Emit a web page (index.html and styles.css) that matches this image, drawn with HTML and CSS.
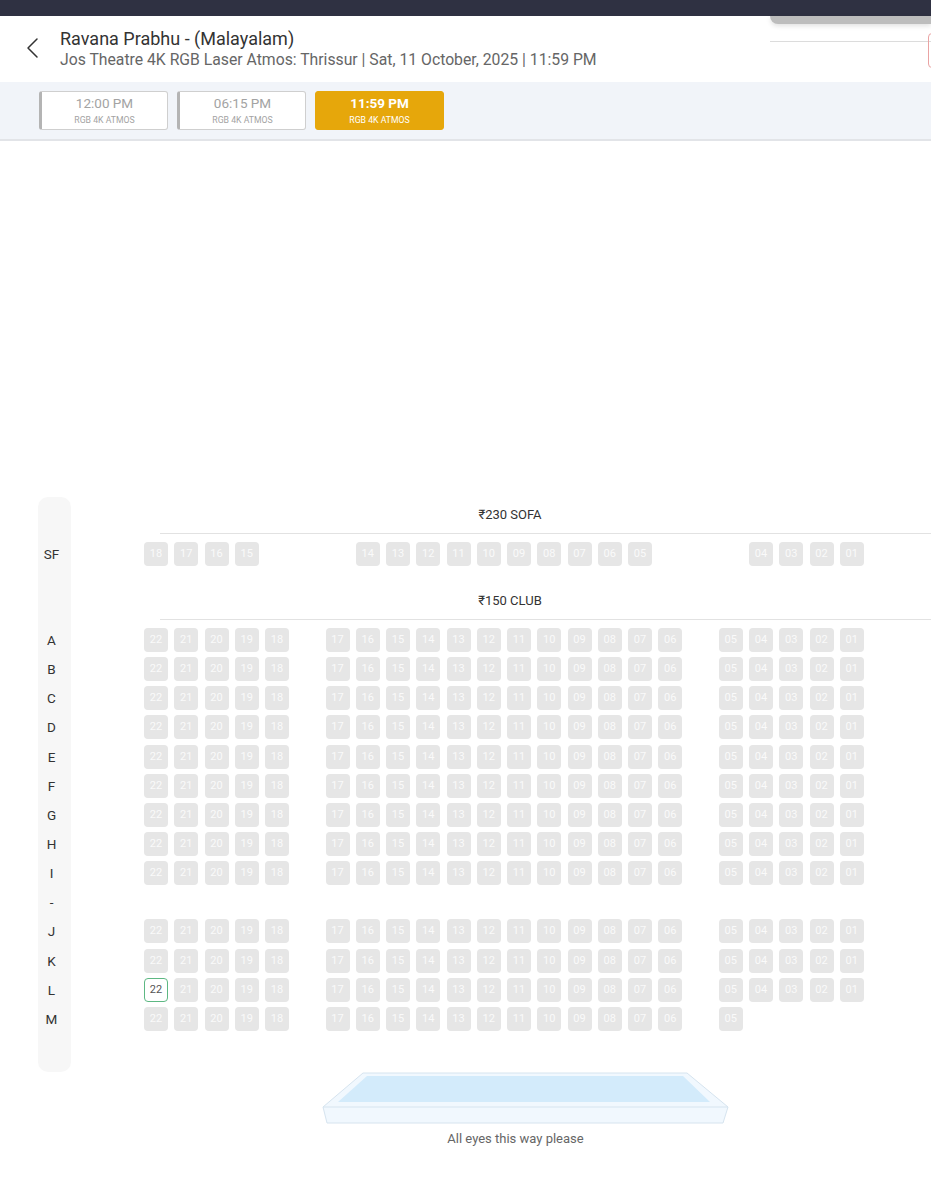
FILE: index.html
```html
<!DOCTYPE html>
<html lang="en">
<head>
    <meta charset="UTF-8">
    <meta name="viewport" content="width=device-width, initial-scale=1.0">
    <title>Ravana Prabhu - Seat Layout</title>
    <link rel="stylesheet" href="styles.css">
</head>
<body>
    <div class="topbar"></div>

    <div class="header">
        <div class="back">
            <svg width="16" height="22" viewBox="0 0 16 22"><path d="M12 2 L3 11 L12 20" fill="none" stroke="#333" stroke-width="1.5" stroke-linecap="round" stroke-linejoin="round"/></svg>
        </div>
        <div class="title-block">
            <div class="title">Ravana Prabhu - (Malayalam)</div>
            <div class="subtitle">Jos Theatre 4K RGB Laser Atmos: Thrissur | Sat, 11 October, 2025 | 11:59 PM</div>
        </div>
        <!-- restos de um menu aberto no canto direito -->
        <div class="menu-shade"></div>
        <div class="menu-line"></div>
        <div class="menu-box"></div>
    </div>

    <div class="shows">
        <div class="show">
            <div class="show-time">12:00 PM</div>
            <div class="show-tag">RGB 4K ATMOS</div>
        </div>
        <div class="show">
            <div class="show-time">06:15 PM</div>
            <div class="show-tag">RGB 4K ATMOS</div>
        </div>
        <div class="show active">
            <div class="show-time">11:59 PM</div>
            <div class="show-tag">RGB 4K ATMOS</div>
        </div>
    </div>

    <div class="seatmap">
        <div class="row-labels" id="rowLabels"></div>
        <div class="seats" id="seats"></div>
    </div>

    <div class="screen">
        <svg width="407" height="52" viewBox="0 0 407 52">
            <polygon points="41,1 365,1 406,35 401,51 5,51 1,35" fill="#f1f8fe" stroke="#d6e4ef" stroke-width="1"/>
            <line x1="1" y1="35" x2="406" y2="35" stroke="#d6e4ef" stroke-width="1"/>
            <polygon points="45,4 361,4 388,30 16,30" fill="#d3ebfb"/>
        </svg>
        <div class="screen-note">All eyes this way please</div>
    </div>

    <script>
        // monta a grade de assentos: 24 colunas, null = espaco vazio
        var clubCols = [22, 21, 20, 19, 18, null, 17, 16, 15, 14, 13, 12, 11, 10, 9, 8, 7, 6, null, 5, 4, 3, 2, 1];
        var sofaCols = [18, 17, 16, 15, null, null, null, 14, 13, 12, 11, 10, 9, 8, 7, 6, 5, null, null, null, 4, 3, 2, 1];
        var lastRow = [22, 21, 20, 19, 18, null, 17, 16, 15, 14, 13, 12, 11, 10, 9, 8, 7, 6, null, 5];

        var labels = document.getElementById('rowLabels');
        var seats = document.getElementById('seats');

        function addLabel(text, cls) {
            var d = document.createElement('div');
            d.className = cls;
            d.textContent = text;
            labels.appendChild(d);
        }

        function addSection(name, cls) {
            var h = document.createElement('div');
            h.className = 'section ' + cls;
            h.innerHTML = '<div class="section-name">' + name + '</div><div class="section-line"></div>';
            seats.appendChild(h);
        }

        function addRow(cols, selectedCol, extra) {
            var r = document.createElement('div');
            r.className = 'seat-row' + (extra ? ' ' + extra : '');
            cols.forEach(function (n, i) {
                var s = document.createElement('span');
                if (n === null) {
                    s.className = 'slot';
                } else {
                    s.className = i === selectedCol ? 'seat open' : 'seat';
                    s.textContent = (n < 10 ? '0' : '') + n;
                }
                r.appendChild(s);
            });
            seats.appendChild(r);
        }

        addSection('₹230 SOFA', 'first');
        addLabel('SF', 'lbl lbl-sofa');
        addRow(sofaCols, -1, 'sofa-row');

        addSection('₹150 CLUB', 'second');
        var rows = ['A', 'B', 'C', 'D', 'E', 'F', 'G', 'H', 'I', '-', 'J', 'K', 'L', 'M'];
        rows.forEach(function (r) {
            addLabel(r, r === 'A' ? 'lbl lbl-club' : 'lbl');
            if (r === '-') {
                var e = document.createElement('div');
                e.className = 'seat-row';
                seats.appendChild(e);
            } else if (r === 'M') {
                addRow(lastRow, -1);
            } else {
                addRow(clubCols, r === 'L' ? 0 : -1);
            }
        });
    </script>
</body>
</html>
```

FILE: styles.css
```css
body {
    margin: 0;
    width: 931px;
    overflow-x: hidden;
    background-color: #fff;
    font-family: Roboto, "Noto Sans", sans-serif;
    color: #333;
}
.topbar {
    height: 16px;
    background-color: #2f3142;
}
.header {
    position: relative;
    height: 66px;
    display: flex;
    align-items: center;
}
.back {
    width: 60px;
    padding-left: 25px;
    padding-bottom: 2px;
    box-sizing: border-box;
}
.back svg {
    display: block;
}
.title-block {
    padding-bottom: 1px;
}
.title {
    font-size: 18px;
    color: #333;
    line-height: 22px;
}
.subtitle {
    font-size: 15.75px;
    color: #666;
    line-height: 20px;
}
/* menu aberto por cima do cabecalho */
.menu-shade {
    position: absolute;
    top: 0;
    left: 770px;
    width: 161px;
    height: 8px;
    background-color: #bdbdbd;
    border-bottom-left-radius: 8px;
    box-shadow: 0 2px 5px rgba(0, 0, 0, 0.12);
}
.menu-line {
    position: absolute;
    top: 25px;
    left: 770px;
    width: 161px;
    height: 1px;
    background-color: #dcdcdc;
}
.menu-box {
    position: absolute;
    top: 17px;
    left: 928px;
    width: 20px;
    height: 33px;
    border: 1px solid #eaa3a3;
    border-radius: 4px;
}
.shows {
    height: 59px;
    box-sizing: border-box;
    padding: 9px 0 0 39px;
    display: flex;
    gap: 9px;
    background-color: #f1f4f9;
    border-bottom: 2px solid #e2e4e8;
}
.show {
    width: 129px;
    height: 39px;
    box-sizing: border-box;
    background-color: #fff;
    border: 1px solid #cfcfcf;
    border-left: 3px solid #b4b4b4;
    border-radius: 3px;
    text-align: center;
    color: #a3a3a3;
}
.show-time {
    font-size: 13.5px;
    line-height: 16px;
    margin-top: 3px;
}
.show-tag {
    font-size: 8.7px;
    line-height: 12px;
    margin-top: 3px;
}
.show.active {
    background-color: #e6a70b;
    border: 1px solid #e6a70b;
    color: #fff;
}
.show.active .show-time {
    font-weight: bold;
}
.seatmap {
    display: flex;
    margin: 356px 0 0 38px;
}
.row-labels {
    width: 33px;
    flex-shrink: 0;
    box-sizing: border-box;
    padding: 45px 6px 36px 0;
    background-color: #f7f7f7;
    border-radius: 10px;
}
.lbl {
    height: 24px;
    line-height: 24px;
    margin-bottom: 5.15px;
    text-align: center;
    font-size: 13.5px;
    color: #333;
}
.lbl-sofa {
    margin-bottom: 0;
}
.lbl-club {
    margin-top: 62px;
}
.seats {
    margin-left: 73px;
    width: 787px;
    flex-shrink: 0;
}
.section-name {
    width: 732px;
    height: 36px;
    line-height: 36px;
    text-align: center;
    font-size: 13px;
    color: #333;
}
.section.second {
    padding-top: 17px;
}
.section-line {
    height: 1px;
    margin: 0 0 8px 16px;
    background-color: #e2e2e2;
}
.seat-row {
    display: grid;
    grid-template-columns: repeat(24, 24px);
    column-gap: 6.25px;
    height: 24px;
    margin-bottom: 5.15px;
}
.seat-row.sofa-row {
    margin-bottom: 0;
}
.seat {
    height: 24px;
    border-radius: 4px;
    background-color: #e6e6e6;
    color: #fafafa;
    font-size: 11px;
    line-height: 24px;
    text-align: center;
}
.seat.open {
    box-sizing: border-box;
    background-color: #fff;
    border: 1px solid #5db883;
    color: #555;
    line-height: 22px;
}
.screen {
    margin: 0 0 0 322px;
    width: 407px;
}
.screen svg {
    display: block;
}
.screen-note {
    margin-top: 7px;
    padding-right: 20px;
    text-align: center;
    font-size: 13px;
    color: #666;
}
```
